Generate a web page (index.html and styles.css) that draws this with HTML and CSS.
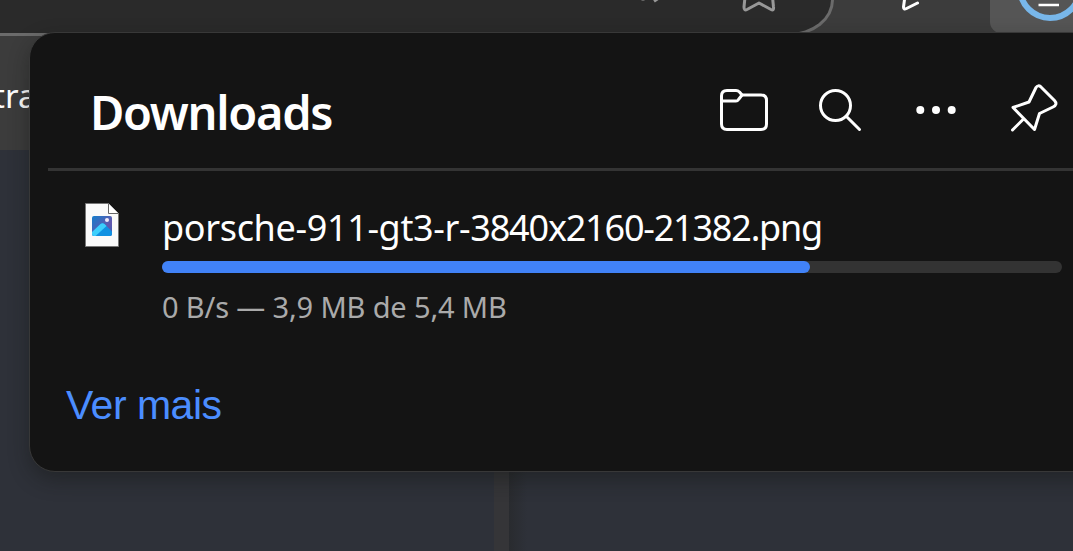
FILE: index.html
```html
<!DOCTYPE html>
<html lang="pt-BR">
<head>
<meta charset="utf-8">
<title>Downloads</title>
<link rel="stylesheet" href="styles.css">
</head>
<body>
<div class="browser">
  <header class="toolbar">
    <div class="address-bar">
      <svg class="address-icons" width="140" height="20" viewBox="640 0 140 20">
        <path d="M643 -1.500v2M654 1.200l6-4" />
        <path d="M745 -3l-1 10q0 4 3 2.500l12-6.500 12 6.500q3 1.500 2.500-2.500l-1-10" />
      </svg>
    </div>
    <svg class="pointer-icon" width="30" height="20" viewBox="895 0 30 20">
      <path d="M905 -4l-1.500 11q0 3 3 1.500l11-5.500" />
    </svg>
    <div class="download-button">
      <svg width="83" height="33" viewBox="990 0 83 33">
        <circle cx="1050" cy="-12" r="30" />
        <path d="M1038.500 5h20.500" />
      </svg>
    </div>
  </header>
  <div class="bookmarks">tra</div>
  <main class="page"><div class="page-left"></div><div class="page-divider"></div><div class="page-right"></div></main>
</div>
<section class="panel">
  <div class="panel-header">
    <h1 class="title">Downloads</h1>
    <nav class="actions">
      <svg width="60" height="60" viewBox="714 80 60 60">
        <path d="M727 90.500h9q2 0 3.500 1.500l2.500 3h19q5.500 0 5.500 5.500v23.500q0 5.500-5.500 5.500h-34q-5.500 0-5.500-5.500v-28q0-5.500 5.500-5.500z" />
        <path d="M721.500 101h14.500q1.500 0 2.500-1.500l3.500-4.500" />
      </svg>
      <svg width="60" height="60" viewBox="810 80 60 60">
        <circle cx="835.500" cy="105.500" r="15" /><path d="M846.500 116.500l13 13" />
      </svg>
      <svg class="dots" width="60" height="60" viewBox="906 80 60 60">
        <circle cx="920.300" cy="110" r="4" /><circle cx="936" cy="110" r="4" /><circle cx="951.700" cy="110" r="4" />
      </svg>
      <svg width="60" height="60" viewBox="1002 80 60 60">
        <path d="M1036 87.500l-7 14.500-16 5.500 21.500 22 5-16 13.500-6.500q5-2.500 1.500-6.500l-13.500-13.500q-3-2.500-5 .500zM1023.500 119l-11 11" />
      </svg>
    </nav>
  </div>
  <article class="item">
    <svg class="file-icon" width="36" height="46" viewBox="84 202 36 46">
      <defs>
        <linearGradient id="sky" x1="0" y1="0" x2="1" y2="1"><stop offset="0" stop-color="#137dcc"/><stop offset=".65" stop-color="#6458ae"/><stop offset="1" stop-color="#3263b8"/></linearGradient>
        <clipPath id="frame"><rect x="92" y="216" width="20" height="20" rx="2"/></clipPath>
      </defs>
      <path d="M85.500 203.500h23l10 10v33h-33z" fill="#fafafa" stroke="#777"/>
      <path d="M108.500 203.500v10h10" fill="#fff" stroke="#666"/>
      <g clip-path="url(#frame)">
        <path d="M92 216h20v20h-20z" fill="url(#sky)"/>
        <path d="M92 233l8.500-9q2-1.500 4 0l9 9v4h-21z" fill="#1091e2"/>
        <path d="M91 233l9.500-9q2-1.500 4 0l2 2-12 11h-4z" fill="#3dcffc"/>
      </g>
      <circle cx="107" cy="220" r="2" fill="#f1eafa"/>
    </svg>
    <div class="details">
      <div class="filename"><span class="name-start">porsche-911-gt3-r-</span>3840x2160-21382.png</div>
      <div class="track"><div class="fill"></div></div>
      <div class="status">0 B/s — 3,9 MB de 5,4 MB</div>
    </div>
  </article>
  <a class="more">Ver mais</a>
</section>
</body>
</html>
```
FILE: styles.css
```css
* { box-sizing: border-box; }
body {
  margin: 0;
  width: 1073px;
  height: 551px;
  overflow: hidden;
  position: relative;
  background: #2e3139;
  font-family: "Noto Sans", sans-serif;
}
svg { display: block; fill: none; flex: none; }
.browser { display: flex; flex-direction: column; height: 551px; }
.toolbar { display: flex; height: 36px; background: #3c3c3c; }
.address-bar {
  width: 834px;
  height: 36px;
  padding-left: 640px;
  background: #2a2a2a;
  border: solid #6b6b6b;
  border-width: 0 3px 3px 0;
  border-bottom-right-radius: 50px 40px;
}
.address-icons { stroke: #989898; stroke-width: 3; stroke-linejoin: round; }
.pointer-icon { margin-left: 61px; stroke: #fff; stroke-width: 3; stroke-linecap: round; stroke-linejoin: round; }
.download-button { margin-left: 65px; width: 83px; height: 33px; background: #555; border-bottom-left-radius: 11px; }
.download-button circle { stroke: #78b7ea; stroke-width: 6; }
.download-button path { stroke: #fff; stroke-width: 2.500px; }
.bookmarks {
  height: 114px;
  padding: 36px 0 0;
  background: #3c3c3c;
  color: #fff;
  font-size: 33px;
  line-height: 48px;
  text-indent: -7px;
}
.page { display: flex; flex: 1; background: #2e3139; }
.page-left { width: 494px; }
.page-divider { width: 15px; background: #353538; }
.page-right { flex: 1; background: linear-gradient(90deg, #292b2f, #2e3139 18px); }
.panel {
  position: absolute;
  left: 29px;
  top: 32px;
  width: 1090px;
  height: 440px;
  border: 1px solid #383838;
  border-radius: 26px;
  background: #141414;
  box-shadow: 0 8px 20px rgba(20, 22, 20, .42);
}
.panel-header {
  display: flex;
  align-items: center;
  justify-content: space-between;
  height: 138px;
  margin-left: 18px;
  padding: 23px 56px 0 42px;
  border-bottom: 3px solid #343434;
}
.title { margin: 0; color: #fff; font-size: 47px; line-height: 64px; font-weight: 600; letter-spacing: -1.3px; }
.actions { display: flex; gap: 36px; margin-top: -5px; stroke: #fff; stroke-width: 3; stroke-linecap: round; stroke-linejoin: round; }
.dots { fill: #fff; stroke: none; }
.item { display: flex; gap: 42px; padding: 31px 0 0 54px; }
.details { width: 900px; }
.filename { margin-top: 2px; height: 57px; line-height: 48px; color: #fff; font-size: 36px; letter-spacing: -1.2px; white-space: nowrap; }
.name-start { letter-spacing: -.35px; }
.track { height: 12px; border-radius: 6px; background: #333; }
.fill { width: 72%; height: 12px; border-radius: 6px; background: #4182f7; }
.status { margin-top: 13px; height: 43px; line-height: 42px; color: #aaa; font-size: 29px; letter-spacing: -.15px; white-space: nowrap; }
.more {
  display: block;
  margin: 52px 0 0 36px;
  color: #4b8dff;
  font-family: "Liberation Sans", sans-serif;
  font-size: 41px;
  line-height: 48px;
  letter-spacing: -.5px;
}
```
